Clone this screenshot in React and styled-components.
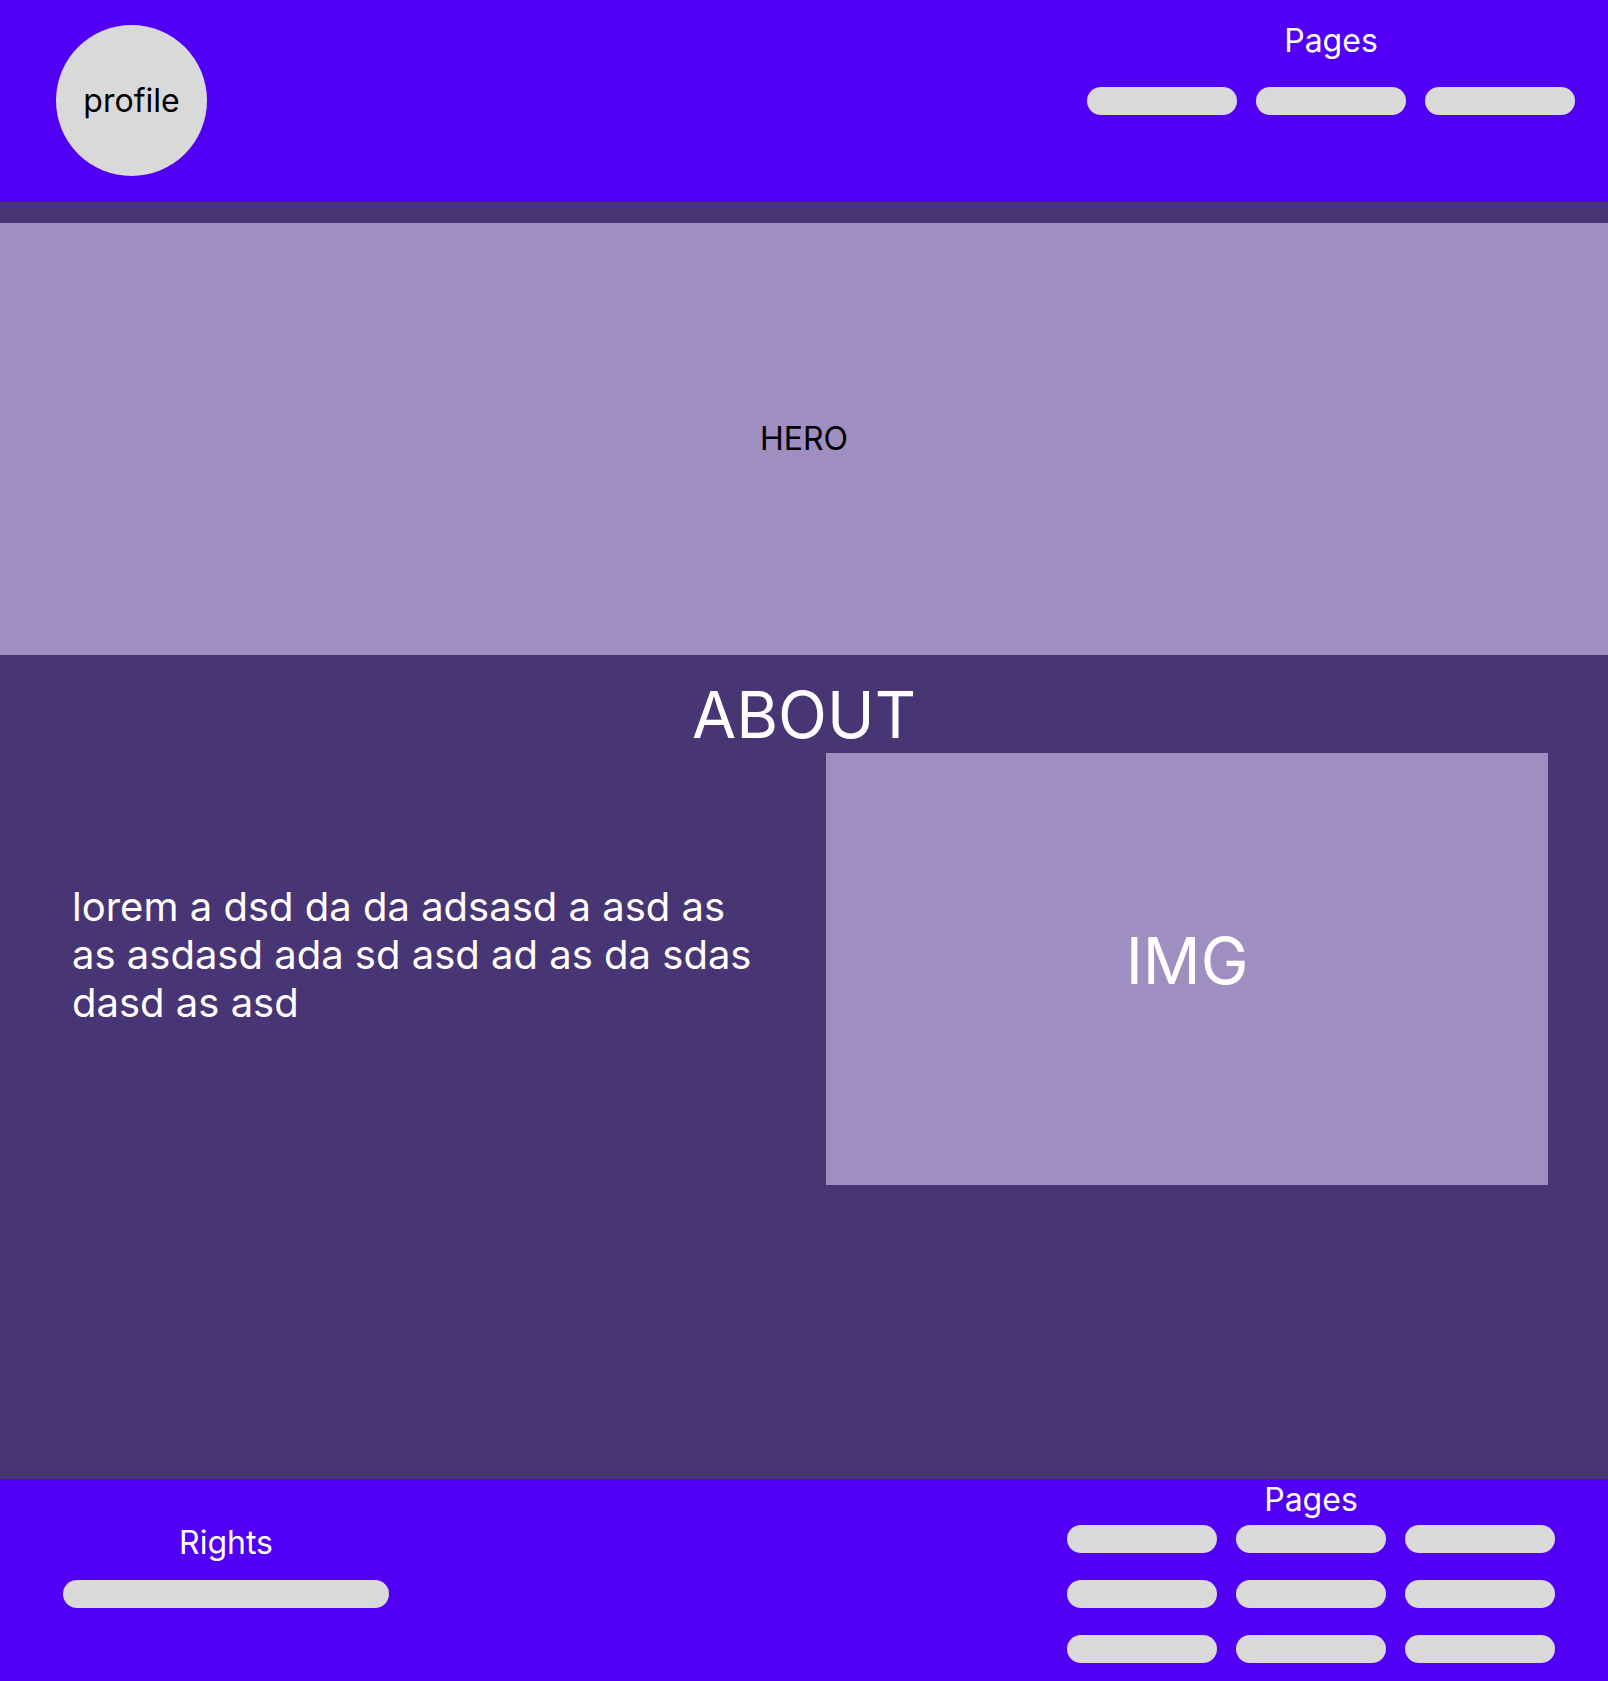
import React from "react";
import styled, { createGlobalStyle } from "styled-components";

const GlobalStyle = createGlobalStyle`
  html, body { margin: 0; padding: 0; }
  body { font-family: Inter, "Noto Sans", sans-serif; background: #483573; }
  * { box-sizing: border-box; }
`;

const Page = styled.div`
  width: 100%;
  display: flex;
  flex-direction: column;
`;

const Header = styled.header`
  height: 223px;
  background: #5100f5;
  border-bottom: 21px solid #483573;
  display: flex;
  justify-content: space-between;
  align-items: flex-start;
  padding: 21px 33px 0 56px;
`;

const Avatar = styled.div`
  width: 151px;
  height: 151px;
  margin-top: 4px;
  border-radius: 50%;
  background: #d9d9d9;
  display: flex;
  align-items: center;
  justify-content: center;
  color: #000;
  font-size: 32px;
`;

const NavColumn = styled.nav`
  display: flex;
  flex-direction: column;
  align-items: center;
  gap: ${(p) => p.$gap}px;
`;

const Label = styled.div`
  color: #fff;
  font-size: 32px;
  line-height: normal;
`;

const PillRow = styled.div`
  display: grid;
  grid-template-columns: repeat(3, 150px);
  column-gap: 19px;
  row-gap: 27px;
`;

const Pill = styled.div`
  width: ${(p) => p.$w || 150}px;
  height: 28px;
  border-radius: 14px;
  background: #d9d9d9;
`;

const Hero = styled.section`
  height: 432px;
  background: #9f8fc1;
  display: flex;
  align-items: center;
  justify-content: center;
  padding-bottom: 2px;
  color: #000;
  font-size: 32px;
`;

const About = styled.section`
  height: 824px;
  background: #483573;
  padding: 21px 60px 0 72px;
  display: flex;
  flex-direction: column;
`;

const Title = styled.h2`
  margin: 0;
  font-weight: 400;
  font-size: 64px;
  line-height: normal;
  color: #fff;
  text-align: center;
  margin-left: -72px;
  margin-right: -60px;
`;

const AboutRow = styled.div`
  display: flex;
  justify-content: space-between;
  align-items: flex-start;
`;

const Body = styled.p`
  margin: 130px 0 0 0;
  width: 692px;
  color: #fff;
  font-size: 40px;
  line-height: 48px;
`;

const ImageBox = styled.div`
  width: 722px;
  height: 432px;
  background: #9f8fc1;
  display: flex;
  align-items: center;
  justify-content: center;
  padding-bottom: 18px;
  color: #fff;
  font-size: 64px;
`;

const Footer = styled.footer`
  height: 202px;
  background: #5100f5;
  display: flex;
  justify-content: space-between;
  align-items: flex-start;
  padding: 1px 53px 0 63px;
`;

const RightsColumn = styled.div`
  margin-top: 43px;
  display: flex;
  flex-direction: column;
  align-items: center;
  gap: 18px;
`;

export default function App() {
  return (
    <>
      <GlobalStyle />
      <Page>
        <Header>
          <Avatar>profile</Avatar>
          <NavColumn $gap={27}>
            <Label>Pages</Label>
            <PillRow>
              <Pill />
              <Pill />
              <Pill />
            </PillRow>
          </NavColumn>
        </Header>
        <Hero>HERO</Hero>
        <About>
          <Title>ABOUT</Title>
          <AboutRow>
            <Body>lorem a dsd da da adsasd a asd as as asdasd ada sd asd ad as da sdas dasd as asd</Body>
            <ImageBox>IMG</ImageBox>
          </AboutRow>
        </About>
        <Footer>
          <RightsColumn>
            <Label>Rights</Label>
            <Pill $w={326} />
          </RightsColumn>
          <NavColumn $gap={6}>
            <Label>Pages</Label>
            <PillRow>
              {Array.from({ length: 9 }).map((_, i) => (
                <Pill key={i} />
              ))}
            </PillRow>
          </NavColumn>
        </Footer>
      </Page>
    </>
  );
}
